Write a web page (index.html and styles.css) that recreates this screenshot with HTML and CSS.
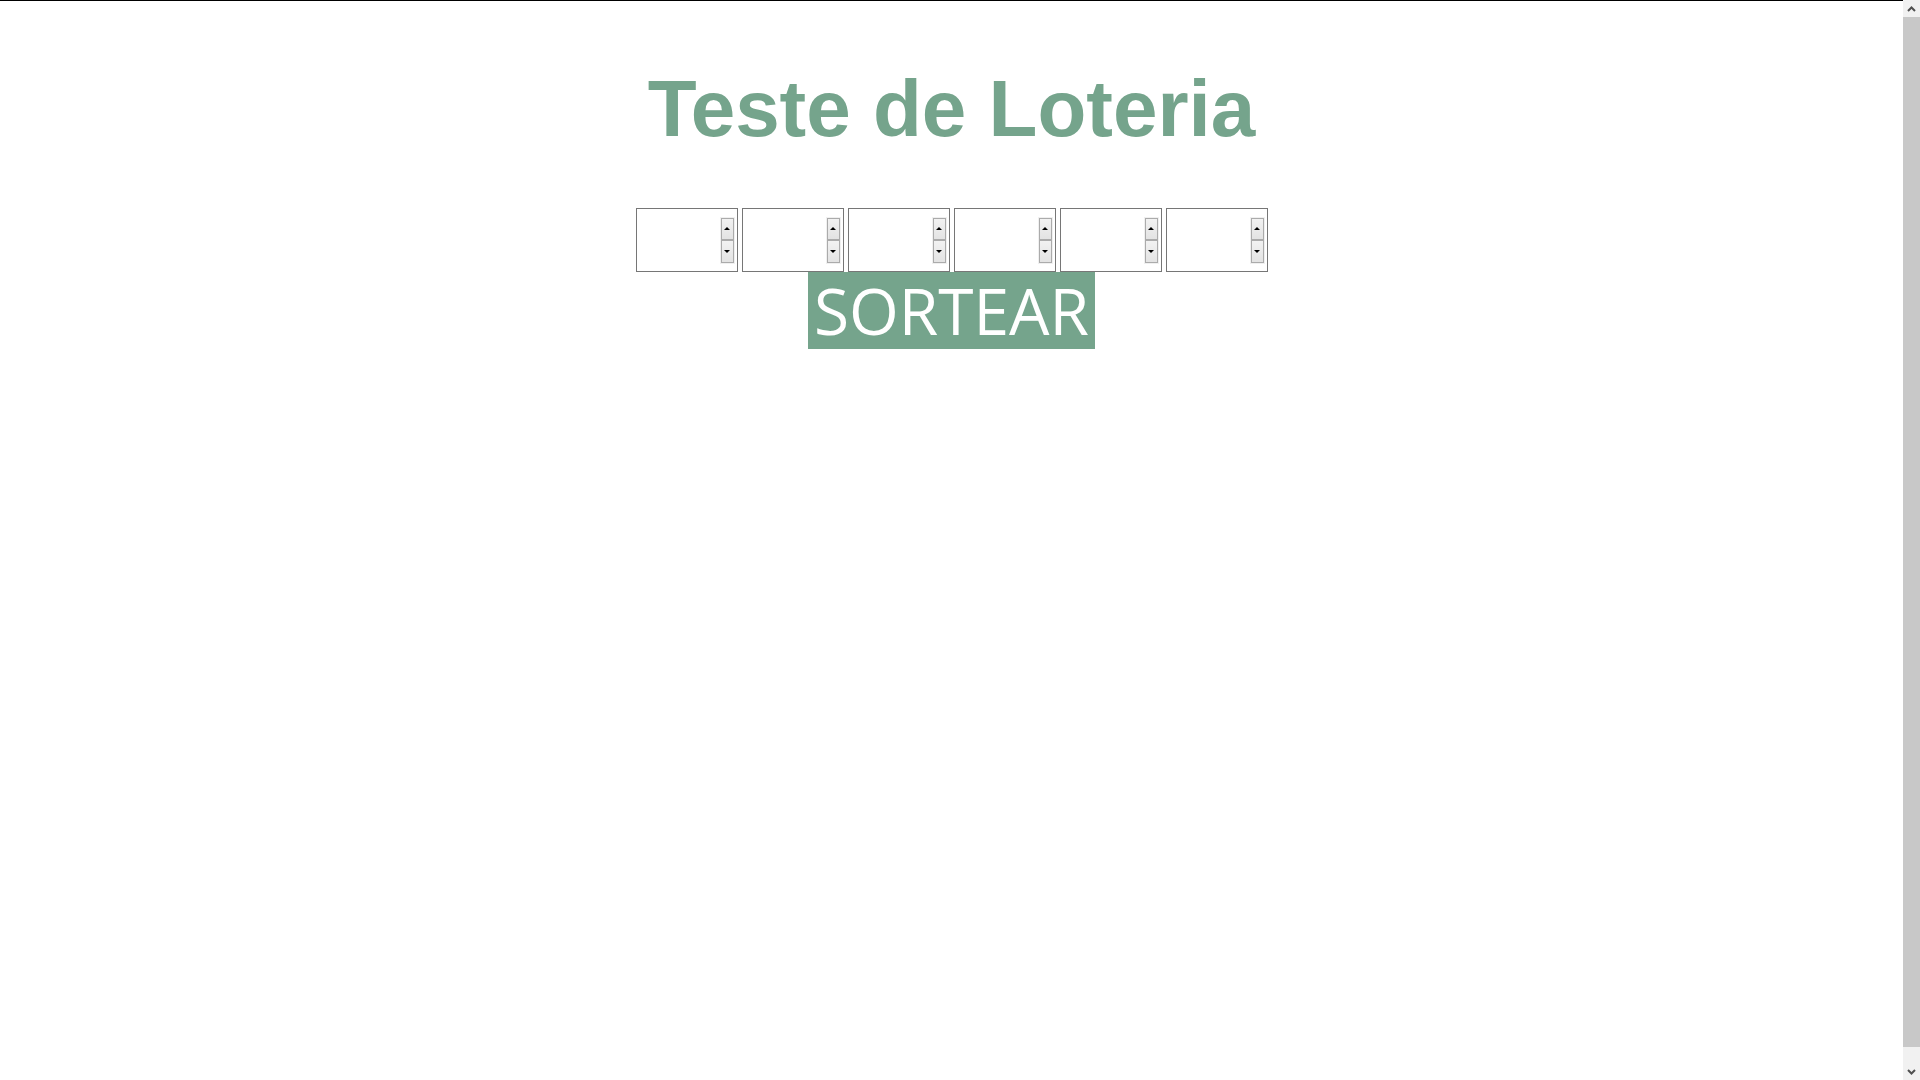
FILE: index.html
```html
<!DOCTYPE html>
<html lang="pt-BR">
<head>
<meta charset="utf-8">
<title>Teste de Loteria</title>
<link rel="stylesheet" href="styles.css">
</head>
<body>
<div class="main">
  <div class="topbar"></div>
  <div class="page">
    <h1 class="title">Teste de Loteria</h1>
    <div class="fields">
      <div class="field"><input class="num" type="number" aria-label="Número 1"><div class="spin" aria-hidden="true"><span class="spin-btn"><i class="tri-up"></i></span><span class="spin-btn"><i class="tri-down"></i></span></div></div>
      <div class="field"><input class="num" type="number" aria-label="Número 2"><div class="spin" aria-hidden="true"><span class="spin-btn"><i class="tri-up"></i></span><span class="spin-btn"><i class="tri-down"></i></span></div></div>
      <div class="field"><input class="num" type="number" aria-label="Número 3"><div class="spin" aria-hidden="true"><span class="spin-btn"><i class="tri-up"></i></span><span class="spin-btn"><i class="tri-down"></i></span></div></div>
      <div class="field"><input class="num" type="number" aria-label="Número 4"><div class="spin" aria-hidden="true"><span class="spin-btn"><i class="tri-up"></i></span><span class="spin-btn"><i class="tri-down"></i></span></div></div>
      <div class="field"><input class="num" type="number" aria-label="Número 5"><div class="spin" aria-hidden="true"><span class="spin-btn"><i class="tri-up"></i></span><span class="spin-btn"><i class="tri-down"></i></span></div></div>
      <div class="field"><input class="num" type="number" aria-label="Número 6"><div class="spin" aria-hidden="true"><span class="spin-btn"><i class="tri-up"></i></span><span class="spin-btn"><i class="tri-down"></i></span></div></div>
    </div>
    <div class="actions">
      <button class="draw" type="button">SORTEAR</button>
    </div>
  </div>
</div>
<div class="scrollbar" aria-hidden="true">
  <div class="sb-arrow">
    <svg width="9" height="6" viewBox="0 0 9 6"><path d="M1 5 L4.5 1.5 L8 5" fill="none" stroke="#505050" stroke-width="2"/></svg>
  </div>
  <div class="sb-track"><div class="sb-thumb"></div></div>
  <div class="sb-arrow">
    <svg width="9" height="6" viewBox="0 0 9 6"><path d="M1 1 L4.5 4.5 L8 1" fill="none" stroke="#505050" stroke-width="2"/></svg>
  </div>
</div>
</body>
</html>
```

FILE: styles.css
```css
html, body {
  margin: 0;
  padding: 0;
  background: #ffffff;
}

body {
  display: flex;
  height: 100vh;
  overflow: hidden;
  font-family: "Liberation Serif", serif;
  font-size: 16px;
}

.main {
  flex: 1;
  min-width: 0;
  display: flex;
  flex-direction: column;
}

.topbar {
  height: 1px;
  background: #000000;
}

.page {
  padding: 8px;
}

.title {
  margin: 53.6px 0;
  text-align: center;
  font-family: "Liberation Sans", Arial, sans-serif;
  font-weight: 700;
  font-size: 80px;
  line-height: normal;
  color: #75a48c;
}

.fields {
  display: flex;
  justify-content: center;
  gap: 4px;
}

.field {
  box-sizing: border-box;
  width: 102px;
  height: 64px;
  border: 1px solid #767676;
  background: #ffffff;
  display: flex;
  align-items: center;
  padding-right: 2px;
}

.num {
  flex: 1;
  min-width: 0;
  height: 100%;
  border: 0;
  padding: 0 2px;
  margin: 0;
  background: transparent;
  font-family: "Liberation Sans", Arial, sans-serif;
  font-size: 13px;
  outline: none;
  -moz-appearance: textfield;
  appearance: textfield;
}

.num::-webkit-inner-spin-button,
.num::-webkit-outer-spin-button {
  -webkit-appearance: none;
  margin: 0;
}

.spin {
  box-sizing: border-box;
  width: 15px;
  height: 47px;
  padding: 1px;
  background: #f0f0f0;
  display: flex;
  flex-direction: column;
}

.spin-btn {
  flex: 1;
  box-sizing: border-box;
  border: 1px solid #ababab;
  background: linear-gradient(#f2f2f2, #e3e3e3);
  display: flex;
  align-items: center;
  justify-content: center;
}

.tri-up {
  width: 0;
  height: 0;
  border-left: 3px solid transparent;
  border-right: 3px solid transparent;
  border-bottom: 3px solid #000000;
}

.tri-down {
  width: 0;
  height: 0;
  border-left: 3px solid transparent;
  border-right: 3px solid transparent;
  border-top: 3px solid #000000;
}

.actions {
  display: flex;
  justify-content: center;
}

.draw {
  margin: 0;
  border: 0;
  padding: 0 6px;
  background: #75a48c;
  color: #ffffff;
  font-family: "Open Sans", "Segoe UI", sans-serif;
  font-weight: 400;
  font-size: 64px;
  line-height: 77px;
  height: 77px;
  cursor: pointer;
}

.scrollbar {
  flex: none;
  width: 17px;
  height: 100vh;
  background: #f1f1f1;
  display: flex;
  flex-direction: column;
}

.sb-arrow {
  flex: none;
  height: 17px;
  display: flex;
  align-items: center;
  justify-content: center;
}

.sb-track {
  flex: 1;
  display: flex;
  flex-direction: column;
}

.sb-thumb {
  height: 1030px;
  background: #c8c8c8;
}
```
